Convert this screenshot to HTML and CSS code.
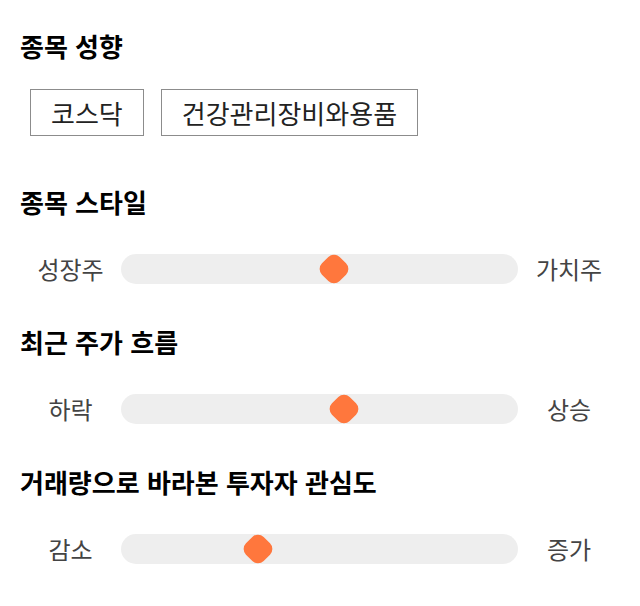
FILE: index.html
```html
<!DOCTYPE html>
<html lang="ko">
<head>
    <meta charset="UTF-8">
    <meta name="viewport" content="width=device-width, initial-scale=1.0">
    <title>종목 분석</title>
    <link rel="stylesheet" href="styles.css">
</head>
<body>

    <div class="panel">
        <h2 class="title">종목 성향</h2>
        <div class="tags">
            <span class="tag">코스닥</span>
            <span class="tag">건강관리장비와용품</span>
        </div>

        <h2 class="title">종목 스타일</h2>
        <div class="scale">
            <span class="scale-label">성장주</span>
            <div class="track">
                <span class="thumb" style="left: 53.6%"></span>
            </div>
            <span class="scale-label">가치주</span>
        </div>

        <h2 class="title">최근 주가 흐름</h2>
        <div class="scale">
            <span class="scale-label">하락</span>
            <div class="track">
                <span class="thumb" style="left: 56.2%"></span>
            </div>
            <span class="scale-label">상승</span>
        </div>

        <h2 class="title">거래량으로 바라본 투자자 관심도</h2>
        <div class="scale">
            <span class="scale-label">감소</span>
            <div class="track">
                <span class="thumb" style="left: 34.5%"></span>
            </div>
            <span class="scale-label">증가</span>
        </div>
    </div>

</body>
</html>
```

FILE: styles.css
```css
body {
    margin: 0;
    background-color: #fff;
    font-family: "Noto Sans CJK KR", "Noto Sans", sans-serif;
    color: #000;
}
.panel {
    padding: 30px 20px 20px;
}
.title {
    margin: 0;
    font-size: 26px;
    font-weight: bold;
    line-height: 32px;
}
.tags {
    display: flex;
    gap: 17px;
    margin: 27px 0 50px;
    padding-left: 10px;
}
.tag {
    display: flex;
    align-items: center;
    height: 45px;
    padding: 0 20px;
    border: 1px solid #8c8c8c;
    font-size: 26px;
    color: #222;
}
.scale {
    display: grid;
    grid-template-columns: 101px 1fr 102px;
    align-items: center;
    margin: 36px 0 42px;
}
.scale-label {
    text-align: center;
    font-size: 24px;
    line-height: 30px;
    color: #444;
}
.track {
    position: relative;
    height: 30px;
    border-radius: 15px;
    background-color: #eee;
}
.thumb {
    position: absolute;
    top: 50%;
    width: 25px;
    height: 25px;
    border-radius: 8px;
    background-color: #ff773d;
    transform: translate(-50%, -50%) rotate(45deg);
}
```
